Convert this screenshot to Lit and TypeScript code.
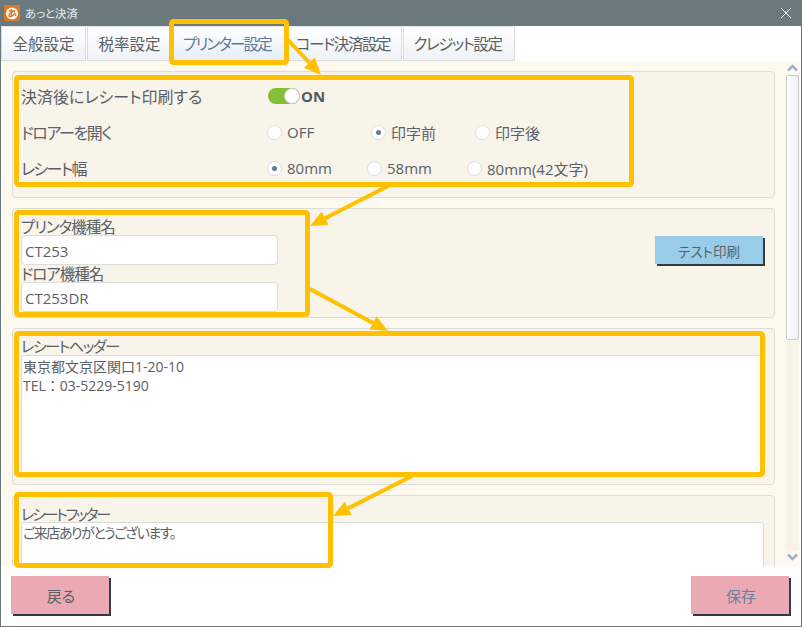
import { LitElement, html, css, svg } from "lit";
import { customElement } from "lit/decorators.js";

@customElement("app-root")
export class AppRoot extends LitElement {
  static styles = css`
    :host {
      display: block;
      position: relative;
      width: 802px;
      height: 627px;
      overflow: hidden;
      font-family: "Open Sans", "Noto Sans CJK JP", sans-serif;
      font-feature-settings: "palt";
      color: #5b6064;
      background: #fff;
    }
    * { box-sizing: border-box; }
    .win {
      width: 100%;
      height: 100%;
      display: flex;
      flex-direction: column;
      border: 1px solid #6a797d;
      border-top: 0;
    }
    .title {
      height: 26px;
      flex: none;
      margin: 0 -1px;
      background: #6a797d;
      display: flex;
      align-items: center;
      padding: 0 10px 0 4px;
      gap: 5px;
      color: #e8eeee;
      font-size: 11.5px;
      letter-spacing: -0.2px;
    }
    .logo { width: 16px; height: 16px; flex: none; }
    .title span { flex: 1; }
    .close { width: 12px; height: 12px; flex: none; }
    .tabs {
      height: 35px;
      flex: none;
      display: flex;
      gap: 1px;
      background: #fff;
    }
    .tab {
      height: 35px;
      display: flex;
      align-items: center;
      justify-content: center;
      font-size: 15.5px;
      color: #5b6064;
      background: linear-gradient(#fff, #eef2f6);
      border: 1px solid #d9dde0;
      border-top-color: #e4e7e9;
    }
    .tab.w85 { width: 85px; }
    .tab.w112 { width: 112px; }
    .tab.w115 { width: 115px; margin-left: 1px; }
    .tab.kana { letter-spacing: -1.4px; padding-right: 3px; }
    .tab.active { color: #5d7b98; background: linear-gradient(#fff, #e6eef6); letter-spacing: -1.8px; padding-right: 4px; }
    .body {
      flex: 1;
      min-height: 0;
      display: flex;
      background: #fef9ee;
      overflow: hidden;
    }
    .cards {
      width: 775px;
      flex: none;
      padding: 10px 0 0 11px;
      display: flex;
      flex-direction: column;
      gap: 10px;
    }
    .card {
      flex: none;
      width: 763px;
      background: #f8f4ea;
      border: 1px solid #dcdcd8;
      border-radius: 4px;
    }
    .c1 { height: 127px; padding: 6px 9px 0 8px; display: grid; grid-template-rows: 36px 36px 36px; }
    .row { display: flex; align-items: center; font-size: 16px; }
    .row .lbl { width: 246px; flex: none; }
    .row .lbl.t1 { letter-spacing: -1.4px; }
    .row .lbl.t2 { letter-spacing: -1.6px; }
    .opt { display: flex; align-items: center; gap: 5px; font-size: 15px; }
    .opt.w100 { width: 100px; }
    .opt.w104 { width: 104px; }
    .opt.w140 { width: 140px; }
    .radio {
      width: 15px;
      height: 15px;
      border-radius: 50%;
      background: #fff;
      border: 1px solid #d8dde0;
      flex: none;
      display: flex;
      align-items: center;
      justify-content: center;
    }
    .radio.on::after {
      content: "";
      width: 5px;
      height: 5px;
      border-radius: 50%;
      background: #5d7b98;
    }
    .switch { display: flex; align-items: center; font-size: 15px; font-weight: 700; color: #555a5e; }
    .track {
      width: 32px;
      height: 16px;
      border-radius: 8px;
      background: #84bf38;
      position: relative;
      margin: 0 1px 0 1px;
    }
    .knob {
      position: absolute;
      right: 0;
      top: 0;
      width: 16px;
      height: 16px;
      border-radius: 50%;
      background: #fff;
      border: 1px solid #c8ccc8;
    }
    .c2 { height: 110px; padding: 9px 11px 0 8px; display: flex; justify-content: space-between; }
    .fields { width: 257px; display: flex; flex-direction: column; }
    .fl { font-size: 15.5px; line-height: 19px; height: 17px; letter-spacing: -1px; }
    .in {
      height: 30px;
      background: #fff;
      border: 1px solid #dcdcd8;
      border-radius: 4px;
      display: flex;
      align-items: center;
      padding: 2px 0 0 3px;
      font-size: 15px;
    }
    .test {
      width: 108px;
      height: 28px;
      margin-top: 18px;
      background: #98cce8;
      box-shadow: 2px 2px 0 #333a40;
      font-size: 13.5px;
      display: flex;
      align-items: center;
      justify-content: center;
      padding-top: 1px;
    }
    .c3, .c4 { padding: 0 10px 0 8px; }
    .c3 { height: 157px; }
    .c4 { height: 120px; }
    .h { font-size: 15px; height: 26px; white-space: nowrap; }
    .c3 .h { line-height: 34px; letter-spacing: -1.4px; }
    .c4 .h { line-height: 36px; letter-spacing: -2.2px; }
    .ta {
      width: 100%;
      background: #fff;
      border: 1px solid #dcdcd8;
      border-radius: 3px;
      padding: 1px;
      font-size: 14px;
      line-height: 19px;
      color: #5b6064;
    }
    .c3 .ta { height: 120px; }
    .c4 .ta { height: 80px; padding-top: 0; letter-spacing: -1.5px; }
    .colon { font-feature-settings: normal; }
    .sb {
      flex: 1;
      display: flex;
      flex-direction: column;
      align-items: flex-end;
      padding-right: 2px;
    }
    .chev { width: 11px; height: 8px; margin: 3px 1px 0 0; flex: none; }
    .chev.down { margin: 2px 1px 5px 0; }
    .thumb {
      height: 265px;
      width: 13px;
      margin-top: 3px;
      background: linear-gradient(90deg, #fff, #eef0f4);
      border: 1px solid #c8cacc;
      border-radius: 2px;
      flex: none;
    }
    .rest { flex: 1; width: 13px; background: #f8f4ea; }
    .foot {
      height: 60px;
      flex: none;
      display: flex;
      justify-content: space-between;
      padding: 10px 12px 0 10px;
      background: #fff;
    }
    .btn {
      width: 98px;
      height: 38px;
      padding-left: 2px;
      background: #eba9b3;
      box-shadow: 2px 2px 0 #333a40;
      font-size: 15px;
      display: flex;
      align-items: center;
      justify-content: center;
    }
    .btn.save { color: #667f9c; }
    .anno { position: absolute; inset: 0; width: 802px; height: 627px; pointer-events: none; }
  `;

  private radio(label: string, on: boolean, cls: string) {
    return html`<div class="opt ${cls}">
      <span class="radio ${on ? "on" : ""}"></span><span>${label}</span>
    </div>`;
  }

  private arrow(x1: number, y1: number, x2: number, y2: number) {
    const a = Math.atan2(y2 - y1, x2 - x1);
    const l = 17, w = 7.5;
    const bx = x2 - l * Math.cos(a), by = y2 - l * Math.sin(a);
    const nx = -Math.sin(a) * w, ny = Math.cos(a) * w;
    return svg`<line x1=${x1} y1=${y1} x2=${bx} y2=${by} stroke="#ffc000" stroke-width="4"></line>
      <polygon fill="#ffc000" points="${x2},${y2} ${bx + nx},${by + ny} ${bx - nx},${by - ny}"></polygon>`;
  }

  private box(x: number, y: number, w: number, h: number) {
    return svg`<rect x=${x} y=${y} width=${w} height=${h} rx="2" fill="none" stroke="#ffc000" stroke-width="5"></rect>`;
  }

  render() {
    return html`
      <div class="win">
        <div class="title">
          <svg class="logo" viewBox="0 0 16 16">
            <rect width="16" height="16" fill="#d9772a"></rect>
            <circle cx="8" cy="8.500" r="6" fill="#fff" opacity=".95"></circle>
            <path d="M5 6h6M7.500 4c-.5 3-.5 6 .2 8M11 7c-3-1-6 1-6 3.500 0 2 3 1 4.500-1 1-1.500 3-.5 2 1.500" fill="none" stroke="#d9772a" stroke-width="1.300"></path>
          </svg>
          <span>あっと決済</span>
          <svg class="close" viewBox="0 0 12 12"><path d="M1 1l10 10M11 1L1 11" stroke="#fff" stroke-width="1"></path></svg>
        </div>
        <div class="tabs">
          <div class="tab w85">全般設定</div>
          <div class="tab w85">税率設定</div>
          <div class="tab w112 active">プリンター設定</div>
          <div class="tab w115 kana">コード決済設定</div>
          <div class="tab w112 kana">クレジット設定</div>
        </div>
        <div class="body">
          <div class="cards">
            <div class="card c1">
              <div class="row">
                <div class="lbl">決済後にレシート印刷する</div>
                <div class="switch"><span class="track"><span class="knob"></span></span>ON</div>
              </div>
              <div class="row">
                <div class="lbl t1">ドロアーを開く</div>
                ${this.radio("OFF", false, "w104")}
                ${this.radio("印字前", true, "w104")}
                ${this.radio("印字後", false, "w140")}
              </div>
              <div class="row">
                <div class="lbl t2">レシート幅</div>
                ${this.radio("80mm", true, "w100")}
                ${this.radio("58mm", false, "w100")}
                ${this.radio("80mm(42文字)", false, "w140")}
              </div>
            </div>
            <div class="card c2">
              <div class="fields">
                <div class="fl">プリンタ機種名</div>
                <div class="in">CT253</div>
                <div class="fl">ドロア機種名</div>
                <div class="in">CT253DR</div>
              </div>
              <div class="test">テスト印刷</div>
            </div>
            <div class="card c3">
              <div class="h">レシートヘッダー</div>
              <div class="ta">東京都文京区関口1-20-10<br />TEL<span class="colon">：</span>03-5229-5190</div>
            </div>
            <div class="card c4">
              <div class="h">レシートフッター</div>
              <div class="ta">ご来店ありがとうございます。</div>
            </div>
          </div>
          <div class="sb">
            <svg class="chev" viewBox="0 0 11 8"><path d="M1 6.500L5.500 2l4.500 4.500" fill="none" stroke="#a3b3c6" stroke-width="2.500"></path></svg>
            <div class="thumb"></div>
            <div class="rest"></div>
            <svg class="chev down" viewBox="0 0 11 8"><path d="M1 1.500L5.500 6l4.500-4.500" fill="none" stroke="#a3b3c6" stroke-width="2.500"></path></svg>
          </div>
        </div>
        <div class="foot">
          <div class="btn">戻る</div>
          <div class="btn save">保存</div>
        </div>
      </div>
      <svg class="anno" viewBox="0 0 802 627">
        ${this.box(171.5, 21.5, 115, 41)}
        ${this.box(16.5, 77.5, 615, 107)}
        ${this.box(16.5, 212.5, 291, 102)}
        ${this.box(16.5, 333.5, 746, 141)}
        ${this.box(16.5, 494.5, 314, 71)}
        ${this.arrow(288, 40, 321, 75)}
        ${this.arrow(388, 186, 310, 226)}
        ${this.arrow(310, 289, 388, 331)}
        ${this.arrow(412, 476, 333, 516)}
      </svg>
    `;
  }
}
